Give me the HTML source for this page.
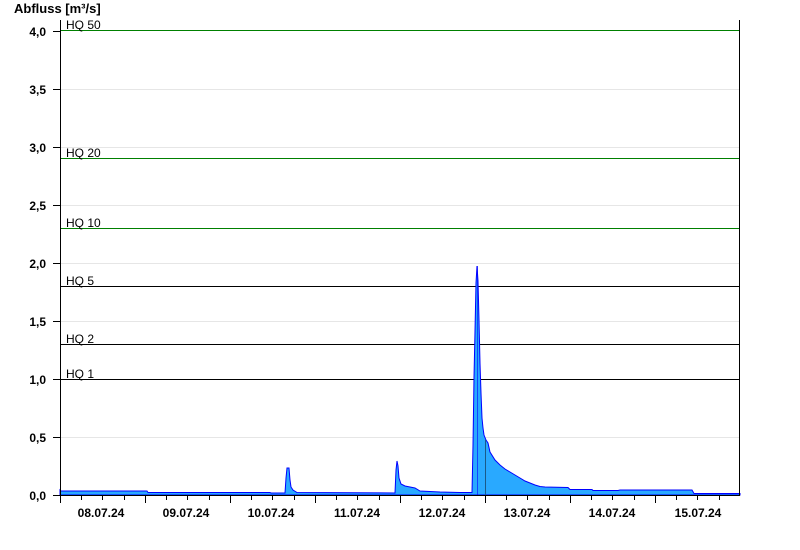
<!DOCTYPE html>
<html><head><meta charset="utf-8"><style>
html,body{margin:0;padding:0;background:#fff;width:800px;height:550px;overflow:hidden}
svg text{font-family:"Liberation Sans",Arial,sans-serif}
</style></head><body>
<svg width="800" height="550" viewBox="0 0 800 550" xmlns="http://www.w3.org/2000/svg">
<text x="14" y="13" font-size="13" font-weight="bold" fill="#000">Abfluss [m³/s]</text>
<g stroke="#e6e6e6" stroke-width="1">
<line x1="60" y1="89.5" x2="740" y2="89.5"/><line x1="60" y1="147.5" x2="740" y2="147.5"/>
<line x1="60" y1="205.5" x2="740" y2="205.5"/><line x1="60" y1="263.5" x2="740" y2="263.5"/>
<line x1="60" y1="321.5" x2="740" y2="321.5"/><line x1="60" y1="437.5" x2="740" y2="437.5"/>
</g>
<g stroke="#008000" stroke-width="1">
<line x1="60" y1="30.5" x2="740" y2="30.5"/><line x1="60" y1="158.5" x2="740" y2="158.5"/><line x1="60" y1="228.5" x2="740" y2="228.5"/>
</g>
<g stroke="#000" stroke-width="1">
<line x1="60" y1="286.5" x2="740" y2="286.5"/><line x1="60" y1="344.5" x2="740" y2="344.5"/><line x1="60" y1="379.5" x2="740" y2="379.5"/>
</g>
<g font-size="12" fill="#000">
<text x="66" y="29">HQ 50</text><text x="66" y="157">HQ 20</text><text x="66" y="227">HQ 10</text>
<text x="66" y="285">HQ 5</text><text x="66" y="343">HQ 2</text><text x="66" y="378">HQ 1</text>
</g>
<path fill="#29a9ff" stroke="#0000ff" stroke-width="1" d="M60,495 L60,490 L61,491 L147,491 L148,492.5 L270,492.5 L271,493 L285,493 L286,478 L287,468 L289,468 L290,480 L291,487 L293,490 L297,492.5 L395,493 L396,470 L397,461 L398,466 L399,478 L401,484 L405,486 L415,488 L420,491 L440,492 L460,492.5 L472,492.5 L473,445 L474,377 L475,331 L476,283 L477,266 L478,281 L479,320 L480,363 L481,393 L482,418 L483,428 L484,435 L486,440 L488,443 L490,452 L495,460 L500,465 L505,469 L510,472 L515,475 L520,478 L525,481 L530,483 L535,485 L540,486.5 L545,487 L568,487.5 L570,489.5 L592,489.5 L593,490.5 L618,490.5 L620,490 L692,490 L694,493.5 L740,493.5 L740,495 Z"/>
<line x1="485.5" y1="440" x2="485.5" y2="495" stroke="#1a5a8a" stroke-width="1"/>
<line x1="477.5" y1="266" x2="477.5" y2="495" stroke="#0000ff" stroke-width="0.6"/>
<g stroke="#000" stroke-width="1">
<line x1="60.5" y1="20" x2="60.5" y2="503"/>
<line x1="739.5" y1="20" x2="739.5" y2="495"/>
<line x1="60" y1="495.5" x2="740" y2="495.5"/>
<line x1="53" y1="31.5" x2="60" y2="31.5"/><line x1="53" y1="89.5" x2="60" y2="89.5"/><line x1="53" y1="147.5" x2="60" y2="147.5"/>
<line x1="53" y1="205.5" x2="60" y2="205.5"/><line x1="53" y1="263.5" x2="60" y2="263.5"/><line x1="53" y1="321.5" x2="60" y2="321.5"/>
<line x1="53" y1="379.5" x2="60" y2="379.5"/><line x1="53" y1="437.5" x2="60" y2="437.5"/><line x1="53" y1="495.5" x2="60" y2="495.5"/>
<line x1="145.5" y1="495" x2="145.5" y2="503"/><line x1="230.5" y1="495" x2="230.5" y2="503"/><line x1="315.5" y1="495" x2="315.5" y2="503"/>
<line x1="400.5" y1="495" x2="400.5" y2="503"/><line x1="485.5" y1="495" x2="485.5" y2="503"/><line x1="570.5" y1="495" x2="570.5" y2="503"/>
<line x1="655.5" y1="495" x2="655.5" y2="503"/>
</g>
<g stroke="#000" stroke-width="1">
<line x1="81.5" y1="495" x2="81.5" y2="500"/><line x1="102.5" y1="495" x2="102.5" y2="500"/><line x1="124.5" y1="495" x2="124.5" y2="500"/>
<line x1="166.5" y1="495" x2="166.5" y2="500"/><line x1="187.5" y1="495" x2="187.5" y2="500"/><line x1="209.5" y1="495" x2="209.5" y2="500"/>
<line x1="251.5" y1="495" x2="251.5" y2="500"/><line x1="272.5" y1="495" x2="272.5" y2="500"/><line x1="294.5" y1="495" x2="294.5" y2="500"/>
<line x1="336.5" y1="495" x2="336.5" y2="500"/><line x1="357.5" y1="495" x2="357.5" y2="500"/><line x1="379.5" y1="495" x2="379.5" y2="500"/>
<line x1="421.5" y1="495" x2="421.5" y2="500"/><line x1="442.5" y1="495" x2="442.5" y2="500"/><line x1="464.5" y1="495" x2="464.5" y2="500"/>
<line x1="506.5" y1="495" x2="506.5" y2="500"/><line x1="527.5" y1="495" x2="527.5" y2="500"/><line x1="549.5" y1="495" x2="549.5" y2="500"/>
<line x1="591.5" y1="495" x2="591.5" y2="500"/><line x1="612.5" y1="495" x2="612.5" y2="500"/><line x1="634.5" y1="495" x2="634.5" y2="500"/>
<line x1="676.5" y1="495" x2="676.5" y2="500"/><line x1="697.5" y1="495" x2="697.5" y2="500"/><line x1="719.5" y1="495" x2="719.5" y2="500"/>
</g>
<g font-size="12" font-weight="bold" fill="#000" text-anchor="end">
<text x="46" y="36">4,0</text><text x="46" y="94">3,5</text><text x="46" y="152">3,0</text>
<text x="46" y="210">2,5</text><text x="46" y="268">2,0</text><text x="46" y="326">1,5</text>
<text x="46" y="384">1,0</text><text x="46" y="442">0,5</text><text x="46" y="500">0,0</text>
</g>
<g font-size="12" font-weight="bold" fill="#000" text-anchor="middle">
<text x="101" y="517">08.07.24</text><text x="186" y="517">09.07.24</text><text x="271" y="517">10.07.24</text>
<text x="357" y="517">11.07.24</text><text x="442" y="517">12.07.24</text><text x="527" y="517">13.07.24</text>
<text x="612" y="517">14.07.24</text><text x="698" y="517">15.07.24</text>
</g>
</svg>
</body></html>
